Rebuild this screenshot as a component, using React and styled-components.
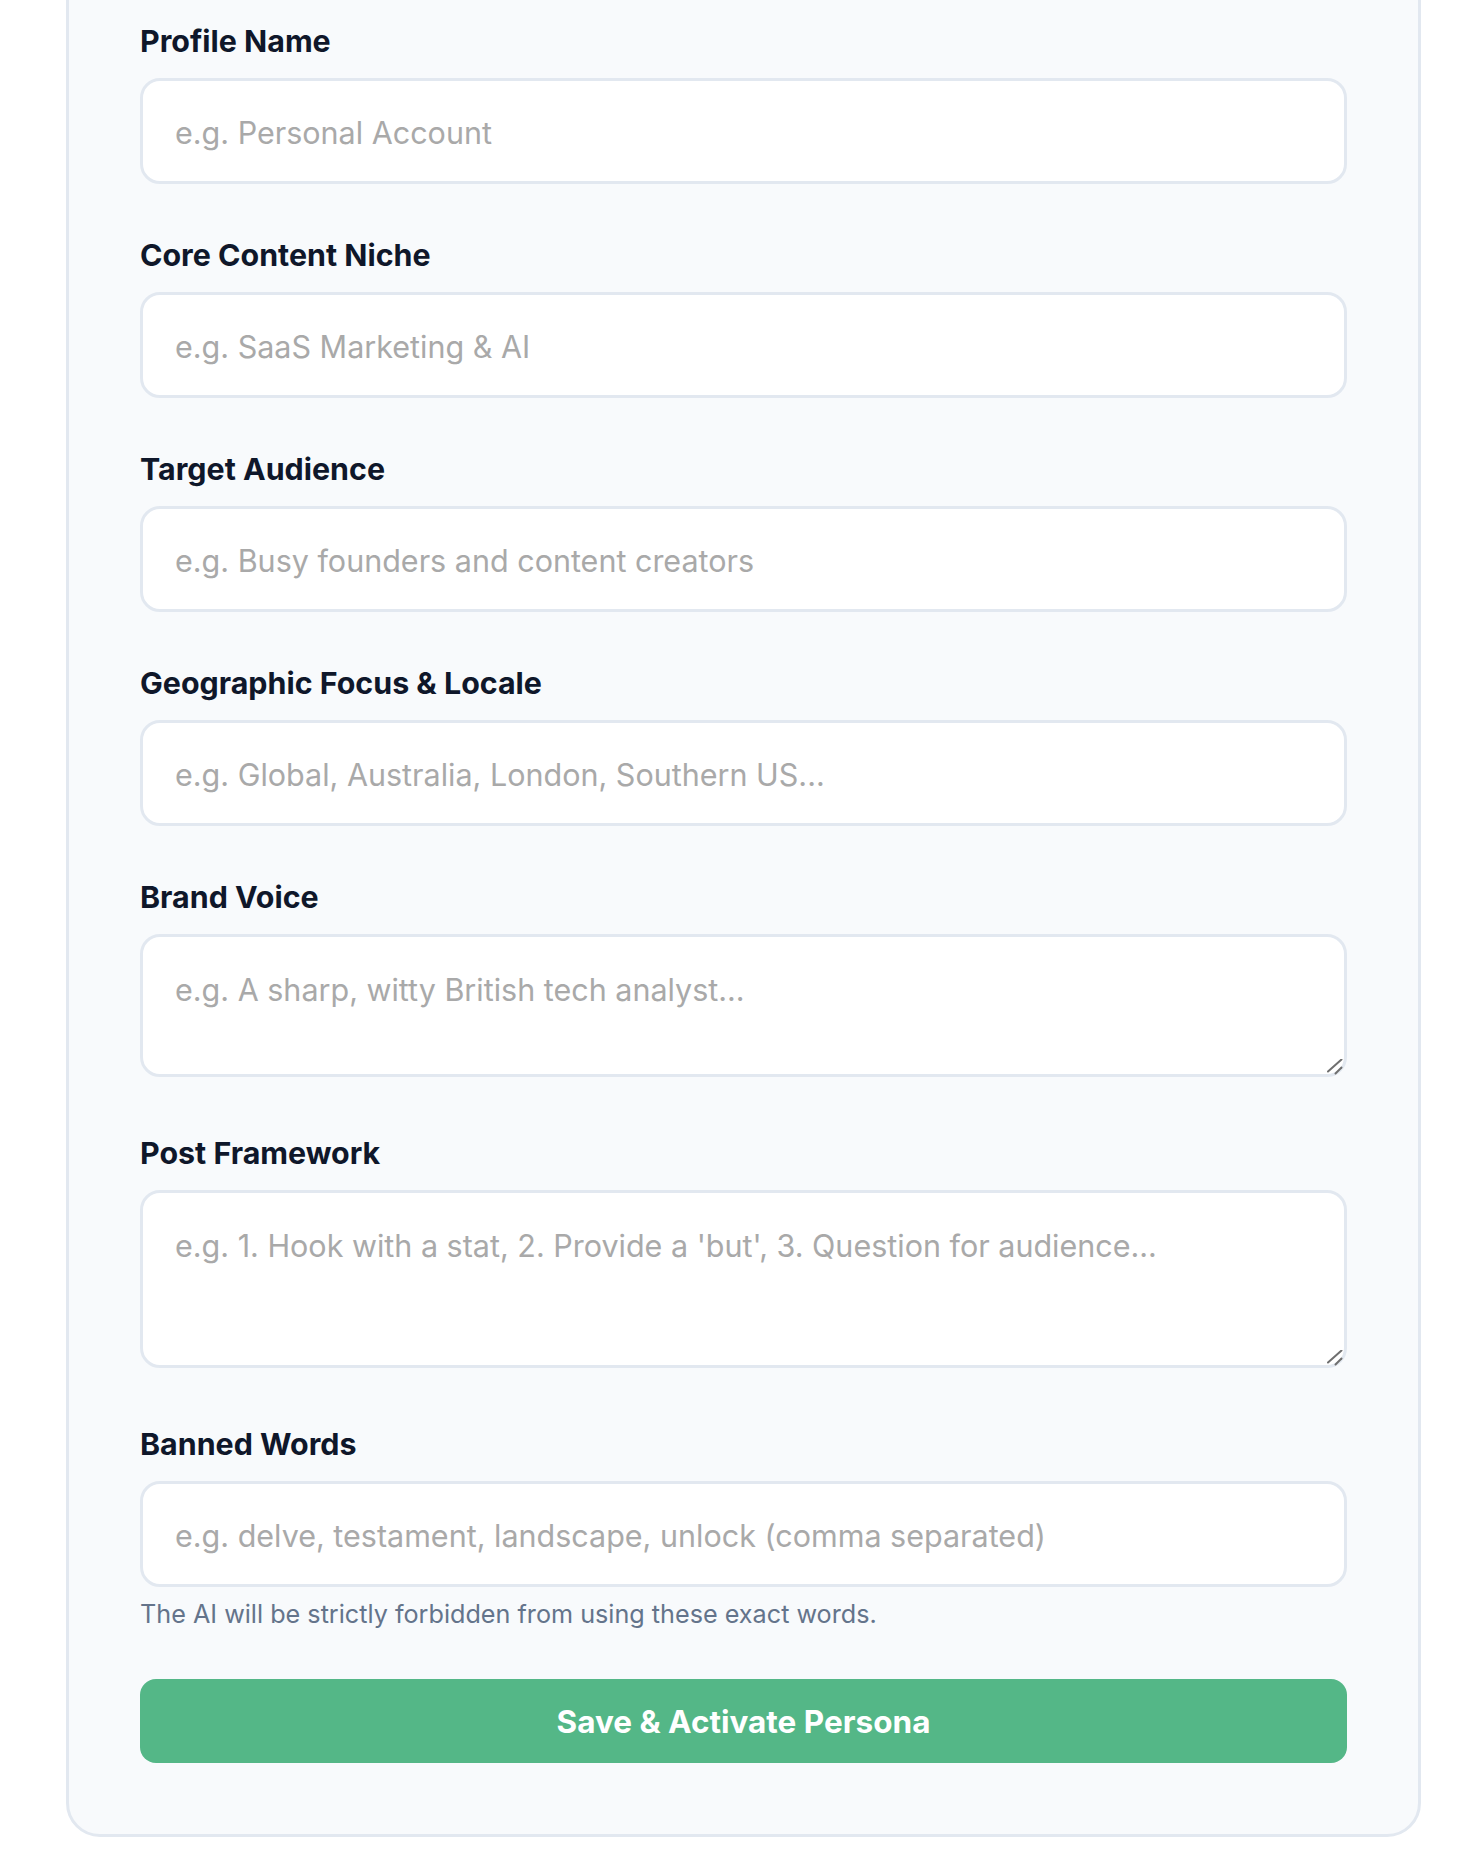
import React from "react";
import styled, { createGlobalStyle } from "styled-components";

const GlobalStyle = createGlobalStyle`
  *, *::before, *::after { box-sizing: border-box; }
  html, body { margin: 0; padding: 0; background: #ffffff; }
  body { font-family: Inter, "Noto Sans", "Liberation Sans", sans-serif; }
`;

const Page = styled.main`
  padding: 0 47px 35px 66px;
  overflow: hidden;
`;

const Card = styled.section`
  margin-top: -51px;
  background: #f8fafc;
  border: 3px solid #e2e8f0;
  border-radius: 34px;
  padding: 71px 71px 71px;
`;

const Form = styled.form`
  display: flex;
  flex-direction: column;
`;

const Field = styled.div`
  display: flex;
  flex-direction: column;
  margin-bottom: ${(p) => (p.$last ? "0" : "53px")};
`;

const Label = styled.label`
  display: block;
  font-family: Inter, "Liberation Sans", sans-serif;
  font-size: 30.4px;
  line-height: 36px;
  font-weight: 700;
  color: #0f172a;
  margin-bottom: 19px;
`;

const fieldBase = `
  display: block;
  width: 100%;
  background: #ffffff;
  border: 3px solid #e2e8f0;
  border-radius: 20px;
  font-family: Inter, "Liberation Sans", sans-serif;
  font-size: 30.5px;
  color: #0f172a;
  outline: none;
  &::placeholder { color: #a9a9a9; opacity: 1; }
`;

const TextInput = styled.input`
  ${fieldBase}
  height: 106px;
  padding: 32px 32px 30px;
  line-height: 38px;
`;

const AreaWrap = styled.div`
  position: relative;
  margin-bottom: 5px;
`;

const TextArea = styled.textarea`
  ${fieldBase}
  height: ${(p) => p.$h}px;
  padding: 34px 32px 20px;
  line-height: 38px;
  resize: none;
`;

const Grip = styled.svg`
  position: absolute;
  right: 4px;
  bottom: 2px;
  width: 16px;
  height: 16px;
  pointer-events: none;
`;

const Hint = styled.p`
  margin: 11px 0 0;
  font-family: Inter, "Liberation Sans", sans-serif;
  font-size: 25.2px;
  line-height: 32px;
  color: #64748b;
`;

const SubmitButton = styled.button`
  margin-top: 49px;
  height: 84px;
  width: 100%;
  border: none;
  border-radius: 16px;
  background: #54b787;
  color: #ffffff;
  font-family: Inter, "Liberation Sans", sans-serif;
  font-size: 31.5px;
  font-weight: 700;
  cursor: pointer;
  display: flex;
  align-items: center;
  justify-content: center;
`;

const fields = [
  { id: "name", label: "Profile Name", ph: "e.g. Personal Account" },
  { id: "niche", label: "Core Content Niche", ph: "e.g. SaaS Marketing & AI" },
  { id: "aud", label: "Target Audience", ph: "e.g. Busy founders and content creators" },
  { id: "geo", label: "Geographic Focus & Locale", ph: "e.g. Global, Australia, London, Southern US..." },
  { id: "voice", label: "Brand Voice", ph: "e.g. A sharp, witty British tech analyst...", area: 143 },
  { id: "frame", label: "Post Framework", ph: "e.g. 1. Hook with a stat, 2. Provide a 'but', 3. Question for audience...", area: 178 },
];

function ResizeGrip() {
  return (
    <Grip viewBox="0 0 16 16" aria-hidden="true">
      <line x1="1" y1="12.5" x2="14.5" y2="0.5" stroke="#6f6f6f" strokeWidth="2" strokeLinecap="round" />
      <line x1="8.5" y1="14.5" x2="14.5" y2="8.5" stroke="#6f6f6f" strokeWidth="2" strokeLinecap="round" />
    </Grip>
  );
}

export default function App() {
  return (
    <>
      <GlobalStyle />
      <Page>
        <Card>
          <Form onSubmit={(e) => e.preventDefault()}>
            {fields.map((f) => (
              <Field key={f.id}>
                <Label htmlFor={f.id}>{f.label}</Label>
                {f.area ? (
                  <AreaWrap>
                    <TextArea id={f.id} placeholder={f.ph} $h={f.area} />
                    <ResizeGrip />
                  </AreaWrap>
                ) : (
                  <TextInput id={f.id} type="text" placeholder={f.ph} />
                )}
              </Field>
            ))}
            <Field $last>
              <Label htmlFor="banned">Banned Words</Label>
              <TextInput
                id="banned"
                type="text"
                placeholder="e.g. delve, testament, landscape, unlock (comma separated)"
              />
              <Hint>The AI will be strictly forbidden from using these exact words.</Hint>
            </Field>
            <SubmitButton type="submit">Save &amp; Activate Persona</SubmitButton>
          </Form>
        </Card>
      </Page>
    </>
  );
}
